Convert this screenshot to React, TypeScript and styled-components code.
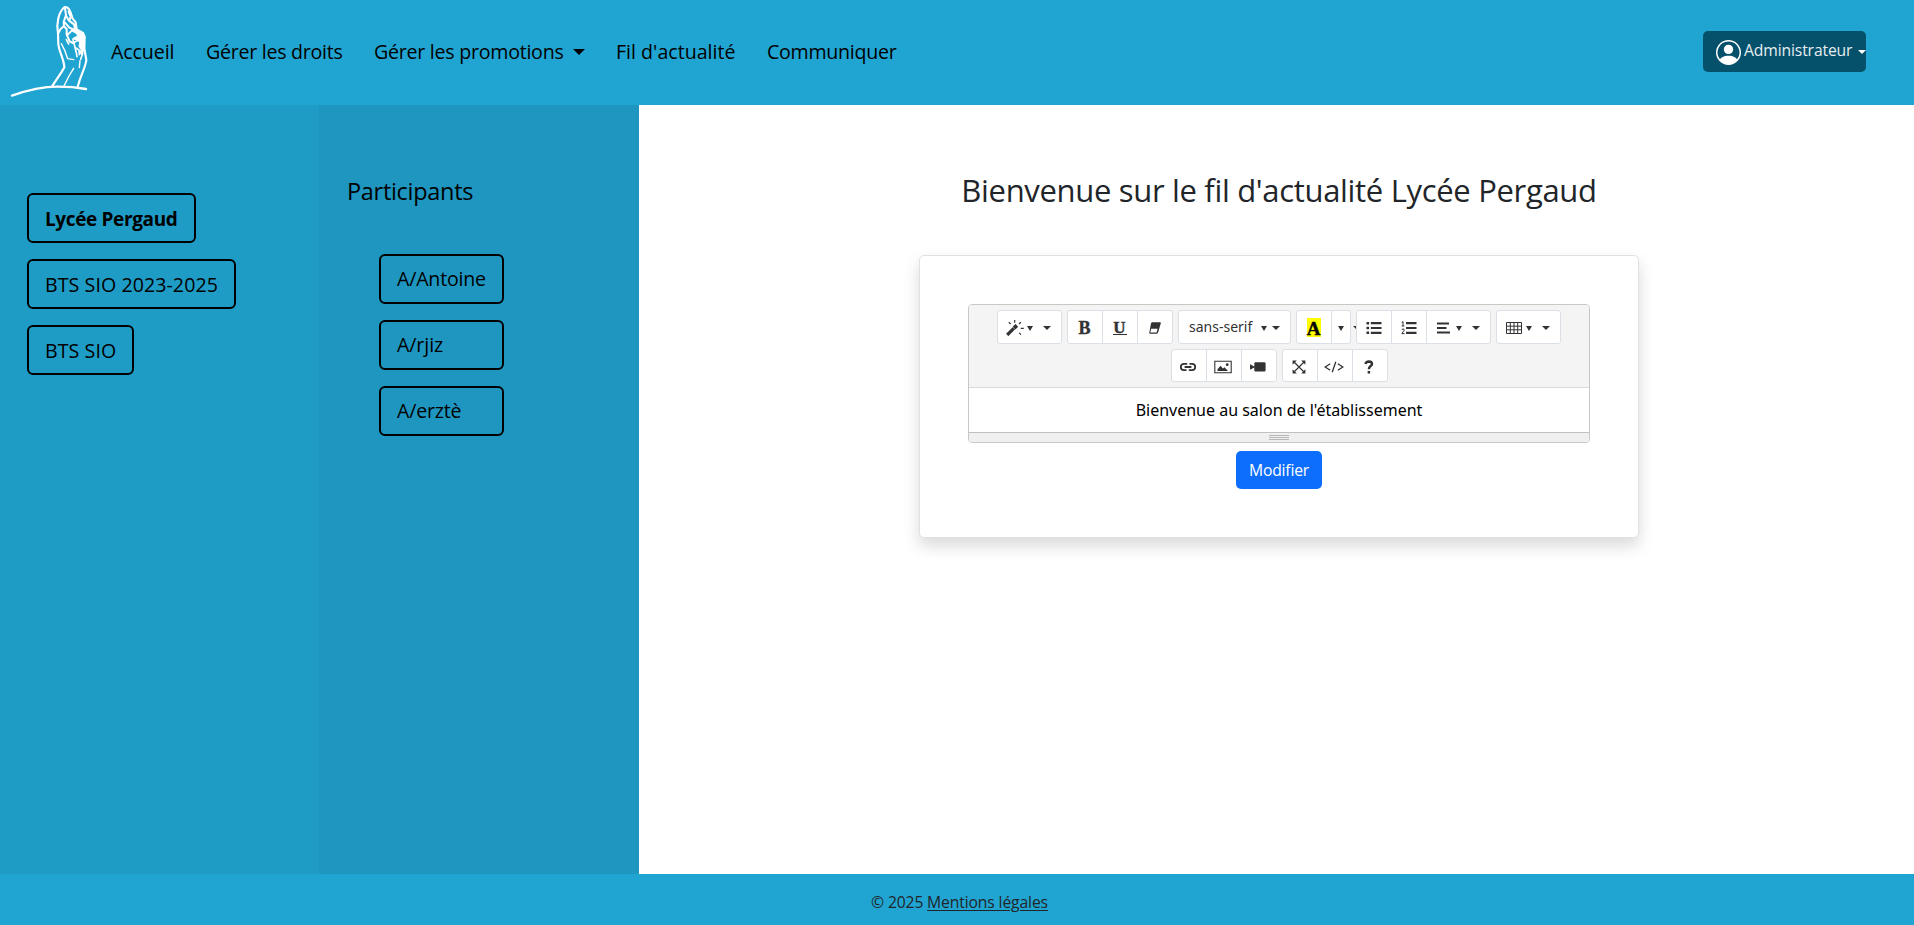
import React from 'react';
import styled, { createGlobalStyle, css } from 'styled-components';
import { BsPersonCircle } from 'react-icons/bs';

const GlobalStyle = createGlobalStyle`
  *, *::before, *::after { box-sizing: border-box; }
  body {
    margin: 0;
    background: #fff;
    color: #212529;
    font: 400 16px/24px "Open Sans", "Noto Sans", sans-serif;
  }
  button { font: inherit; color: inherit; cursor: pointer; }
`;

const Page = styled.div`
  display: flex;
  flex-direction: column;
  height: 100vh;
  overflow: hidden;
`;

const Header = styled.header`
  display: flex;
  align-items: center;
  flex: 0 0 105px;
  padding-right: 48px;
  background: #20a4d1;
`;

const Logo = styled.svg`
  width: 100px;
  height: 105px;
  fill: none;
  stroke: #fff;
  stroke-linecap: round;
  stroke-linejoin: round;
`;

const Nav = styled.nav`
  display: flex;
  gap: 32px;
  margin: -1px auto 0 11px;
`;

const NavLink = styled.a<{ $w: number; $track?: number }>`
  display: flex;
  align-items: center;
  width: ${p => p.$w}px;
  font-size: 19.6px;
  line-height: 30px;
  letter-spacing: ${p => p.$track ?? 0}px;
  color: #000;
  white-space: nowrap;
`;

const Caret = styled.span<{ $half: number; $h: number; $ml?: number }>`
  flex: none;
  width: 0;
  height: 0;
  margin-left: ${p => p.$ml ?? 0}px;
  border: ${p => p.$half}px solid transparent;
  border-top: ${p => p.$h}px solid currentColor;
  border-bottom: 0;
`;

const AccountButton = styled.button`
  display: flex;
  align-items: center;
  width: 163px;
  height: 41px;
  margin-top: -2px;
  padding: 0 0 0 13px;
  border: 0;
  border-radius: 5px;
  background: #05506a;
  color: #fff;
  white-space: nowrap;

  svg { flex: none; margin-top: 2px; }
`;

const AccountName = styled.span`
  width: 111px;
  margin: -4px 4px 0 3px;
  font-size: 15.7px;
  letter-spacing: -0.13px;
  text-align: left;
  color: #e6eef1;
`;

const Body = styled.div`
  display: flex;
  flex: 1;
  min-height: 0;
`;

const Channels = styled.aside`
  display: flex;
  flex-direction: column;
  align-items: flex-start;
  gap: 16px;
  flex: 0 0 319px;
  padding: 88px 27px 0;
  background: #1f9cc6;
`;

const Participants = styled.aside`
  flex: 0 0 320px;
  padding: 72px 28px 0;
  background: #1e96c0;
`;

const PanelTitle = styled.h4`
  margin: 0 0 48px;
  font-size: 23.5px;
  font-weight: 400;
  line-height: 29px;
  letter-spacing: -0.3px;
  color: #000;
`;

const ParticipantList = styled.div`
  display: flex;
  flex-direction: column;
  gap: 16px;
  width: 125px;
  margin-left: 32px;
`;

const OutlineButton = styled.button<{ $w: number; $track?: number; $active?: boolean; $drop?: number }>`
  width: ${p => p.$w}px;
  height: 50px;
  padding: ${p => p.$drop ?? 0}px 0 0 16px;
  border: 2px solid #000;
  border-radius: 6px;
  background: transparent;
  color: #000;
  font-size: 19.6px;
  line-height: 30px;
  letter-spacing: ${p => p.$track ?? 0}px;
  text-align: left;
  white-space: nowrap;
  ${p => p.$active && css`
    font-size: 19px;
    font-weight: 700;
  `}
`;

const Main = styled.main`
  display: flex;
  flex-direction: column;
  align-items: center;
  flex: 1;
  padding: 66px 0 0 5px;
`;

const Title = styled.h2`
  margin: 0 0 46px;
  font-size: 31px;
  font-weight: 400;
  line-height: 38px;
  letter-spacing: -0.32px;
`;

const Card = styled.section`
  display: flex;
  flex-direction: column;
  align-items: center;
  width: 720px;
  padding: 48px;
  border: 1px solid #dee2e6;
  border-radius: 5px;
  background: #fff;
  box-shadow: 0 8px 16px rgba(0, 0, 0, 0.15);
`;

const Editor = styled.div`
  width: 622px;
  margin-bottom: 8px;
  border: 1px solid #c8c8c8;
  border-radius: 4px;
  overflow: hidden;
  font-family: "Noto Sans", sans-serif;
`;

const Toolbar = styled.div`
  display: flex;
  flex-direction: column;
  align-items: center;
  gap: 5px;
  padding: 5px 0;
  border-bottom: 1px solid #d9d9d9;
  background: #f4f4f4;
  color: #333;
`;

const ToolRow = styled.div<{ $h: number }>`
  display: flex;
  gap: 5px;
  height: ${p => p.$h}px;
`;

const ToolGroup = styled.div`
  position: relative;
  display: flex;
`;

const HiddenCaret = styled.span`
  position: absolute;
  left: 57px;
  top: 16px;
  display: flex;
  width: 3px;
  height: 4px;
  overflow: hidden;
`;

const ToolButton = styled.button<{ $w?: number; $menu?: boolean }>`
  display: flex;
  align-items: center;
  justify-content: center;
  width: ${p => p.$w ?? 36}px;
  padding: 2px 1px 0 0;
  border: 1px solid #dae0e5;
  background: #fff;
  & + & { margin-left: -1px; }
  &:first-child { border-top-left-radius: 3px; border-bottom-left-radius: 3px; }
  &:last-of-type { border-top-right-radius: 3px; border-bottom-right-radius: 3px; }
  ${p => p.$menu && css`
    justify-content: flex-start;
    padding-left: 8px;
  `}
`;

const FontName = styled.span`
  width: 66px;
  margin: -2px 0 0 2px;
  font-size: 14px;
  line-height: 20px;
  text-align: left;
`;

const Letter = styled.span<{ $underline?: boolean; $marked?: boolean }>`
  display: block;
  width: 14px;
  height: ${p => (p.$underline ? 15 : 19)}px;
  margin-top: ${p => (p.$underline ? -2 : 0)}px;
  font: 700 18px/19px "Liberation Serif", serif;
  text-align: center;
  -webkit-text-stroke: 0.4px currentColor;
  ${p => p.$underline && css`
    line-height: 15px;
    font-size: 17px;
    border-bottom: 1px solid currentColor;
  `}
  ${p => p.$marked && css`
    background: #ff0;
    color: #000;
    font-size: 19px;
    line-height: 21px;
    margin-top: -2px;
  `}
`;

const Icon = styled.svg`
  flex: none;
  width: 18px;
  height: 16px;
  fill: none;
  stroke: #333;
  stroke-width: 1.3;
`;

const CodeIcon = styled(Icon)`
  width: 20px;
`;

const Editable = styled.div`
  padding: 10px;
  text-align: center;
  color: #000;
  background: #fff;
`;

const StatusBar = styled.div`
  display: flex;
  flex-direction: column;
  align-items: center;
  gap: 1px;
  height: 10px;
  padding-top: 2px;
  border-top: 1px solid #c0c0c0;
  background: #f0f0f0;
`;

const GripLine = styled.span`
  width: 20px;
  height: 1px;
  background: #b8b8b8;
`;

const PrimaryButton = styled.button`
  width: 86px;
  height: 38px;
  padding: 0;
  border: 0;
  border-radius: 5px;
  background: #0d6efd;
  color: #fff;
  font-size: 15.7px;
  letter-spacing: -0.2px;
`;

const Footer = styled.footer`
  display: flex;
  justify-content: center;
  flex: 0 0 51px;
  padding: 16px 0 0 5px;
  background: #20a4d1;
  font-size: 15.7px;
  letter-spacing: -0.13px;
`;

const Copyright = styled.span`
  width: 56px;
`;

const LegalLink = styled.a`
  text-decoration: underline;
  text-underline-offset: 2px;
`;

const MenuCarets = () => (
  <>
    <Caret $half={3.5} $h={5} $ml={3} />
    <Caret $half={4.3} $h={4.3} $ml={9.5} />
  </>
);

const HandLogo = () => (
  <Logo viewBox="0 0 300 315">
    <path strokeWidth="7" d="M36 287C78 272 125 260 172 260C205 260 230 262 258 267" />
    <path strokeWidth="6.5" d="M156 259L184 217L193 202C192 178 178 157 175 133L174 100C168 70 176 35 194 21C204 20 211 32 214 46" />
    <path strokeWidth="6.5" d="M211 38L218 56L227 67L230 88L249 99L254 110L253 145L259 180C257 202 243 222 233 260" />
    <path strokeWidth="4.2" d="M192 258L207 228L221 205M184 131L194 151L203 176L221 179M240 182L238 203" />
    <path strokeWidth="6" d="M195 25L198 45L191 66L192 78L181 88L176 98M198 47L207 62L222 73L225 87M195 68L208 83L228 92M191 78L200 87L200 104L209 124L219 129L235 120M202 105L216 91L230 99M206 34L212 51L208 62" />
    <path fill="#fff" strokeWidth="3" d="M225 91L247 99L254 109L252 145L247 164L239 160L243 149L237 139L239 126L230 120L218 116L232 108Z" />
    <path strokeWidth="5" d="M219 119L225 142L237 150L238 164M199 119L206 132M224 139L229 158L231 170M248 160L242 178" />
  </Logo>
);

const MagicIcon = () => (
  <Icon viewBox="0 0 18 16">
    <path strokeWidth="3.2" d="M1.2 15L7.8 8.4" />
    <path strokeWidth="3.8" d="M8 8.2L10.8 5.4" />
    <path strokeWidth="1.2" d="M8.7 0V2.7M2.8 2.3L4.6 4M14.8 2.3L13 4M14.7 8.3H17.8M13.2 12.8L15 14.6" />
  </Icon>
);

const EraserIcon = () => (
  <Icon viewBox="0 0 18 16">
    <path fill="#333" stroke="none" d="M6.2 2.2H14.2Q15 2.3 14.8 3.3L12.2 12.3Q11.8 13.7 10.6 13.7H4Q3.1 13.6 3.3 12.7L5 3.4Q5.3 2.3 6.2 2.2ZM5.2 8.8L4.3 12.6H10.6L11.6 8.8Z" fillRule="evenodd" />
  </Icon>
);

const UnorderedIcon = () => (
  <Icon viewBox="0 0 18 16">
    <path strokeWidth="2.6" d="M1.5 3.2H4.1M1.5 8H4.1M1.5 12.8H4.1" />
    <path strokeWidth="2.2" d="M5.8 3.2H16.5M5.8 8H16.5M5.8 12.8H16.5" />
  </Icon>
);

const OrderedIcon = () => (
  <Icon viewBox="0 0 18 16">
    <path strokeWidth="2.2" d="M6 3.2H16.5M6 8H16.5M6 12.8H16.5" />
    <path strokeWidth="1" d="M1.7 2.4L3 1.7V6M1.7 6H4.3M1.7 9.4Q4.4 8 4.2 10.3L1.8 13.6H4.6" />
  </Icon>
);

const AlignIcon = () => (
  <Icon viewBox="0 0 18 16">
    <path strokeWidth="1.9" d="M2 3.5H14M2 8H11.5M2 12.5H15" />
  </Icon>
);

const TableIcon = () => (
  <Icon viewBox="0 0 18 16">
    <path strokeWidth="1" d="M1.5 2.5H16.5V13.5H1.5ZM1.5 6.2H16.5M1.5 9.8H16.5M5.3 2.5V13.5M9 2.5V13.5M12.7 2.5V13.5" />
  </Icon>
);

const LinkIcon = () => (
  <Icon viewBox="0 0 18 16">
    <path strokeWidth="1.8" d="M8.2 4.8H5A3.2 3.2 0 0 0 5 11.2H7.5M9.8 11.2H13A3.2 3.2 0 0 0 13 4.8H10.5M5.6 8H12.4" />
  </Icon>
);

const PictureIcon = () => (
  <Icon viewBox="0 0 18 16">
    <path strokeWidth="1.1" d="M0.8 2.2H17.2V13.8H0.8Z" />
    <path fill="#333" stroke="none" d="M3.5 12V10.2L6.5 6.7L9 9.5L10.5 8.2L14 12Z" />
    <circle cx="13.2" cy="5.7" r="1.4" fill="#333" stroke="none" />
  </Icon>
);

const VideoIcon = () => (
  <Icon viewBox="0 0 18 16">
    <path fill="#333" stroke="none" d="M1 5.3L5.3 7.4V4.5Q5.3 3.2 6.6 3.2H15.3Q16.6 3.2 16.6 4.5V11.3Q16.6 12.6 15.3 12.6H6.6Q5.3 12.6 5.3 11.3V8.6L1 10.8Z" />
  </Icon>
);

const FullscreenIcon = () => (
  <Icon viewBox="0 0 18 16">
    <path strokeWidth="1.2" d="M3.5 2.5L14.5 13.5M14.5 2.5L3.5 13.5" />
    <path fill="#333" stroke="none" d="M2.6 1.6H6.8L2.6 5.8ZM15.4 1.6V5.8L11.2 1.6ZM2.6 14.4V10.2L6.8 14.4ZM15.4 14.4H11.2L15.4 10.2Z" />
  </Icon>
);

const SourceIcon = () => (
  <CodeIcon viewBox="0 0 20 16">
    <path d="M6.2 4.8L1.2 8L6.2 11.2M13.8 4.8L18.8 8L13.8 11.2M11.8 2.8L8.2 13.2" />
  </CodeIcon>
);

const HelpIcon = () => (
  <Icon viewBox="0 0 18 16">
    <path strokeWidth="2.5" d="M5.6 5Q5.9 2.4 9 2.4Q12 2.5 12 4.9Q12 6.2 10.4 7.2Q8.9 8.2 8.9 10.3M8.9 12V14.5" />
  </Icon>
);

export default function App() {
  return (
    <Page>
      <GlobalStyle />
      <Header>
        <HandLogo />
        <Nav>
          <NavLink $w={63} $track={-0.1}>Accueil</NavLink>
          <NavLink $w={136} $track={-0.27}>Gérer les droits</NavLink>
          <NavLink $w={210} $track={-0.25}>Gérer les promotions<Caret $half={6} $h={6} $ml={9} /></NavLink>
          <NavLink $w={119}>Fil d'actualité</NavLink>
          <NavLink $w={130} $track={-0.27}>Communiquer</NavLink>
        </Nav>
        <AccountButton>
          <BsPersonCircle size={25} />
          <AccountName>Administrateur</AccountName>
          <Caret $half={4} $h={4} />
        </AccountButton>
      </Header>

      <Body>
        <Channels>
          <OutlineButton $w={169} $track={-0.36} $drop={2} $active>Lycée Pergaud</OutlineButton>
          <OutlineButton $w={209} $track={0.07} $drop={2}>BTS SIO 2023-2025</OutlineButton>
          <OutlineButton $w={107} $track={0.07} $drop={2}>BTS SIO</OutlineButton>
        </Channels>
        <Participants>
          <PanelTitle>Participants</PanelTitle>
          <ParticipantList>
            <OutlineButton $w={125} $track={-0.2}>A/Antoine</OutlineButton>
            <OutlineButton $w={125} $track={-0.1}>A/rjiz</OutlineButton>
            <OutlineButton $w={125} $track={-0.2}>A/erztè</OutlineButton>
          </ParticipantList>
        </Participants>
        <Main>
          <Title>Bienvenue sur le fil d'actualité Lycée Pergaud</Title>
          <Card>
            <Editor>
              <Toolbar>
                <ToolRow $h={34}>
                  <ToolGroup>
                    <ToolButton $w={65} $menu><MagicIcon /><MenuCarets /></ToolButton>
                  </ToolGroup>
                  <ToolGroup>
                    <ToolButton><Letter>B</Letter></ToolButton>
                    <ToolButton><Letter $underline>U</Letter></ToolButton>
                    <ToolButton><EraserIcon /></ToolButton>
                  </ToolGroup>
                  <ToolGroup>
                    <ToolButton $w={113} $menu>
                      <FontName>sans-serif</FontName>
                      <Caret $half={3.5} $h={5} $ml={6} />
                      <Caret $half={4.3} $h={4.3} $ml={5} />
                    </ToolButton>
                  </ToolGroup>
                  <ToolGroup>
                    <ToolButton><Letter $marked>A</Letter></ToolButton>
                    <ToolButton $w={20}><Caret $half={3.5} $h={5} /></ToolButton>
                    <HiddenCaret><Caret $half={4} $h={4} /></HiddenCaret>
                  </ToolGroup>
                  <ToolGroup>
                    <ToolButton><UnorderedIcon /></ToolButton>
                    <ToolButton><OrderedIcon /></ToolButton>
                    <ToolButton $w={65} $menu><AlignIcon /><MenuCarets /></ToolButton>
                  </ToolGroup>
                  <ToolGroup>
                    <ToolButton $w={65} $menu><TableIcon /><MenuCarets /></ToolButton>
                  </ToolGroup>
                </ToolRow>
                <ToolRow $h={33}>
                  <ToolGroup>
                    <ToolButton><LinkIcon /></ToolButton>
                    <ToolButton><PictureIcon /></ToolButton>
                    <ToolButton><VideoIcon /></ToolButton>
                  </ToolGroup>
                  <ToolGroup>
                    <ToolButton><FullscreenIcon /></ToolButton>
                    <ToolButton><SourceIcon /></ToolButton>
                    <ToolButton><HelpIcon /></ToolButton>
                  </ToolGroup>
                </ToolRow>
              </Toolbar>
              <Editable>Bienvenue au salon de l'établissement</Editable>
              <StatusBar>
                <GripLine />
                <GripLine />
                <GripLine />
              </StatusBar>
            </Editor>
            <PrimaryButton>Modifier</PrimaryButton>
          </Card>
        </Main>
      </Body>

      <Footer>
        <Copyright>© 2025</Copyright>
        <LegalLink>Mentions légales</LegalLink>
      </Footer>
    </Page>
  );
}
